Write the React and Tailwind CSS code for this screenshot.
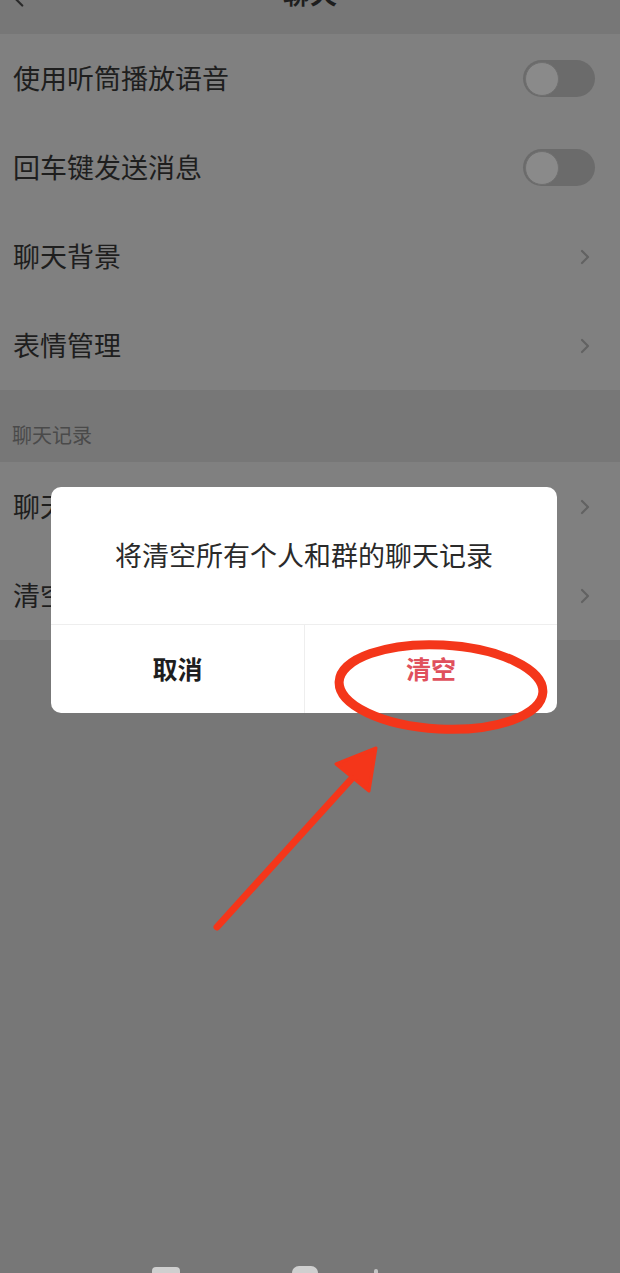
import { ChevronRight, ChevronLeft } from 'lucide-react';

const font = { fontFamily: '"Noto Sans CJK SC", "Noto Sans", sans-serif' };

const Toggle = () => (
  <div className="w-[72px] h-[37px] rounded-full bg-[#6b6b6b] flex items-center px-[2px]">
    <div className="w-[34px] h-[34px] rounded-full bg-[#8a8a8a] border border-[#707070]" />
  </div>
);

const Row = ({ label, right }) => (
  <div className="h-[89px] flex items-center justify-between pl-[13px] pr-[25px]">
    <span className="text-[27px] text-[#1e1e1e]">{label}</span>
    {right === 'toggle' ? (
      <Toggle />
    ) : (
      <ChevronRight className="w-[24px] h-[24px] text-[#626262] mr-[-2px]" strokeWidth={2.2} />
    )}
  </div>
);

export default function App() {
  return (
    <div className="relative w-[620px] h-[1273px] overflow-hidden bg-[#777777] flex flex-col" style={font}>
      {/* header, mostly scrolled off */}
      <div className="h-[34px] shrink-0 bg-[#777777] relative flex justify-center overflow-hidden">
        <ChevronLeft className="absolute left-[6px] top-[-14px] w-[26px] h-[26px] text-[#2a2a2a]" strokeWidth={2} />
        <span className="mt-[-22px] text-[27px] leading-[30px] font-semibold text-[#1e1e1e]">聊天</span>
      </div>

      <div className="bg-[#808080]">
        <Row label="使用听筒播放语音" right="toggle" />
        <Row label="回车键发送消息" right="toggle" />
        <Row label="聊天背景" />
        <Row label="表情管理" />
      </div>

      <div className="h-[72px] flex items-center pl-[12px] pt-[18px]">
        <span className="text-[20px] text-[#4a4a4a]">聊天记录</span>
      </div>

      <div className="bg-[#808080]">
        <Row label="聊天记录备份与迁移" />
        <Row label="清空聊天记录" />
      </div>

      <div className="mt-auto h-[10px] flex items-end">
        <div className="ml-[152px] w-[28px] h-[6px] rounded-t-[4px] bg-[#cfcfcf]" />
        <div className="ml-[112px] w-[26px] h-[7px] rounded-t-full bg-[#cfcfcf]" />
        <div className="ml-[56px] w-[4px] h-[4px] rounded-t-full bg-[#c4c4c4]" />
      </div>

      {/* dialog */}
      <div className="absolute left-[51px] top-[487px] w-[506px] h-[226px] bg-white rounded-[10px] flex flex-col">
        <div className="h-[138px] flex items-center justify-center border-b border-[#eeeeee]">
          <span className="text-[27px] text-[#2a2a2a]">将清空所有个人和群的聊天记录</span>
        </div>
        <div className="flex-1 flex">
          <div className="w-[254px] flex items-center justify-center border-r border-[#eeeeee]">
            <span className="text-[25px] font-bold text-[#1e1e1e]">取消</span>
          </div>
          <div className="flex-1 flex items-center justify-center">
            <span className="text-[25px] font-semibold text-[#e0505c]">清空</span>
          </div>
        </div>
      </div>

      {/* annotation */}
      <svg className="absolute inset-0 pointer-events-none" width="620" height="1273" viewBox="0 0 620 1273">
        <ellipse cx="441" cy="687" rx="102" ry="42" fill="none" stroke="#f4361a" strokeWidth="9" transform="rotate(3 441 687)" />
        <line x1="217" y1="927" x2="355" y2="775" stroke="#f4361a" strokeWidth="7" strokeLinecap="round" />
        <polygon points="376,748 336,764 369,791" fill="#f4361a" stroke="#f4361a" strokeWidth="3" strokeLinejoin="round" />
      </svg>
    </div>
  );
}
